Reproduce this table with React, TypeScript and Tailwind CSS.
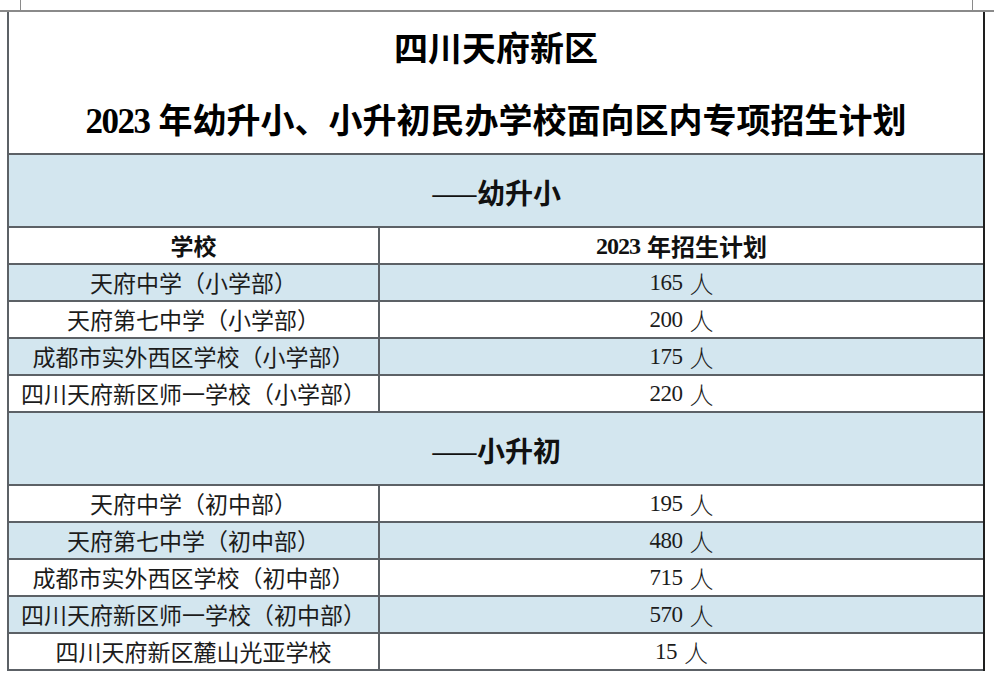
const SANS = "font-['Noto_Sans_CJK_SC',sans-serif]"
const NUM = "font-['Liberation_Serif','Noto_Sans_CJK_SC',serif]"

type Row = { school: string; count: string; blue: boolean }

const primary: Row[] = [
  { school: "天府中学（小学部）", count: "165", blue: true },
  { school: "天府第七中学（小学部）", count: "200", blue: false },
  { school: "成都市实外西区学校（小学部）", count: "175", blue: true },
  { school: "四川天府新区师一学校（小学部）", count: "220", blue: false },
]

const junior: Row[] = [
  { school: "天府中学（初中部）", count: "195", blue: false },
  { school: "天府第七中学（初中部）", count: "480", blue: true },
  { school: "成都市实外西区学校（初中部）", count: "715", blue: false },
  { school: "四川天府新区师一学校（初中部）", count: "570", blue: true },
  { school: "四川天府新区麓山光亚学校", count: "15", blue: false },
]

function SectionHead({ label }: { label: string }) {
  return (
    <div className="h-[73px] flex items-center justify-center bg-[#d3e6ef] border-b-2 border-[#5c6166]">
      <span className={`${SANS} text-[28px] leading-none text-[#111] pt-[2px]`}>
        <span className="font-normal tracking-[-1px]">——</span>
        <span className="font-bold">{label}</span>
      </span>
    </div>
  )
}

function DataRow({ row }: { row: Row }) {
  return (
    <div
      className={`h-[37px] flex border-b-2 border-[#5c6166] ${row.blue ? "bg-[#d3e6ef]" : "bg-white"}`}
    >
      <div
        className={`w-[371px] shrink-0 flex items-center justify-center border-r-2 border-[#5c6166] ${SANS} text-[23px] text-[#1c1c1c] leading-none`}
      >
        {row.school}
      </div>
      <div className="flex-1 flex items-center justify-center text-[#1c1c1c] leading-none">
        <span className={`${NUM} text-[23px] tracking-[-0.5px]`}>{row.count}</span>
        <span className={`${SANS} text-[24px] ml-[7px] font-light`}>人</span>
      </div>
    </div>
  )
}

export default function App() {
  return (
    <div className="w-[994px] h-[688px] bg-white overflow-hidden">
      {/* page corner marks */}
      <div className="h-[12px] flex border-b-2 border-[#8a8a8a]">
        <div className="w-[21px] border-r border-[#8a8a8a]" />
        <div className="flex-1" />
        <div className="w-[22px] border-l border-[#8a8a8a]" />
      </div>

      <div className="ml-[7px] w-[978px] border-l-2 border-[#5c6166] border-r-2 border-r-[#1e1e1e]">
        <div className="h-[143px] flex flex-col items-center justify-center gap-[38px] pt-[3px] border-b-2 border-[#5c6166] text-black">
          <div className={`${SANS} text-[34px] leading-[34px] font-bold`}>四川天府新区</div>
          <div className="leading-[34px] flex items-baseline">
            <span className={`${NUM} text-[35px] font-bold tracking-[-1.5px]`}>2023</span>
            <span className={`${SANS} text-[34px] font-bold ml-[9px]`}>
              年幼升小、小升初民办学校面向区内专项招生计划
            </span>
          </div>
        </div>

        <SectionHead label="幼升小" />

        <div className="h-[37px] flex border-b-2 border-[#5c6166] bg-white text-[#111]">
          <div
            className={`w-[371px] shrink-0 flex items-center justify-center border-r-2 border-[#5c6166] ${SANS} text-[23px] font-bold leading-none`}
          >
            学校
          </div>
          <div className="flex-1 flex items-center justify-center leading-none">
            <span className={`${NUM} text-[24px] font-bold tracking-[-1px]`}>2023</span>
            <span className={`${SANS} text-[24px] font-bold ml-[7px]`}>年招生计划</span>
          </div>
        </div>

        {primary.map((r) => (
          <DataRow key={r.school} row={r} />
        ))}

        <SectionHead label="小升初" />

        {junior.map((r) => (
          <DataRow key={r.school} row={r} />
        ))}
      </div>
    </div>
  )
}
